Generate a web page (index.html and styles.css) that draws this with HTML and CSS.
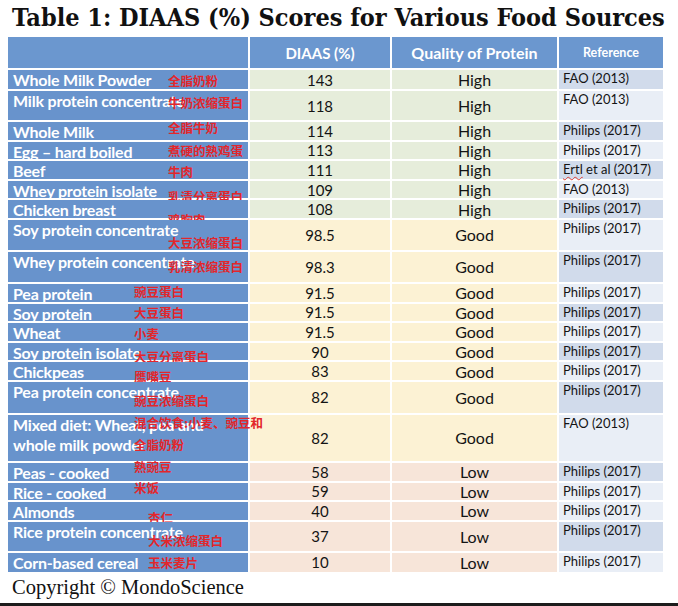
FILE: index.html
```html
<!DOCTYPE html>
<html lang="en">
<head>
<meta charset="utf-8">
<title>DIAAS Scores</title>
<link rel="stylesheet" href="styles.css">
</head>
<body>
<div class="page">
  <h1 class="title">Table 1: DIAAS (%) Scores for Various Food Sources</h1>
  <div class="grid">
    <div class="row head">
      <div class="cell h-name"></div>
      <div class="cell h-num">DIAAS (%)</div>
      <div class="cell h-qual">Quality of Protein</div>
      <div class="cell h-ref">Reference</div>
    </div>

    <div class="row high">
      <div class="cell name">Whole Milk Powder<span class="zh g1 y5">全脂奶粉</span></div>
      <div class="cell num">143</div><div class="cell qual">High</div><div class="cell ref dark">FAO (2013)</div>
    </div>
    <div class="row high">
      <div class="cell name">Milk protein concentrate<span class="zh g1 y6">牛奶浓缩蛋白</span></div>
      <div class="cell num">118</div><div class="cell qual">High</div><div class="cell ref">FAO (2013)</div>
    </div>
    <div class="row high">
      <div class="cell name">Whole Milk<span class="zh g1 y0">全脂牛奶</span></div>
      <div class="cell num">114</div><div class="cell qual">High</div><div class="cell ref dark">Philips (2017)</div>
    </div>
    <div class="row high">
      <div class="cell name">Egg – hard boiled<span class="zh g1 y3">煮硬的熟鸡蛋</span></div>
      <div class="cell num">113</div><div class="cell qual">High</div><div class="cell ref">Philips (2017)</div>
    </div>
    <div class="row high">
      <div class="cell name">Beef<span class="zh g1 y5">牛肉</span></div>
      <div class="cell num">111</div><div class="cell qual">High</div><div class="cell ref dark"><span class="spell">Ertl</span> et al (2017)</div>
    </div>
    <div class="row high">
      <div class="cell name">Whey protein isolate<span class="zh g1 y10">乳清分离蛋白</span></div>
      <div class="cell num">109</div><div class="cell qual">High</div><div class="cell ref">FAO (2013)</div>
    </div>
    <div class="row high">
      <div class="cell name">Chicken breast<span class="zh g1 y14">鸡胸肉</span></div>
      <div class="cell num">108</div><div class="cell qual">High</div><div class="cell ref dark">Philips (2017)</div>
    </div>

    <div class="row good">
      <div class="cell name">Soy protein concentrate<span class="zh g1 y17">大豆浓缩蛋白</span></div>
      <div class="cell num">98.5</div><div class="cell qual">Good</div><div class="cell ref">Philips (2017)</div>
    </div>
    <div class="row good">
      <div class="cell name">Whey protein concentrate<span class="zh g1 y9">乳清浓缩蛋白</span></div>
      <div class="cell num">98.3</div><div class="cell qual">Good</div><div class="cell ref dark">Philips (2017)</div>
    </div>
    <div class="row good">
      <div class="cell name">Pea protein<span class="zh g2 y2">豌豆蛋白</span></div>
      <div class="cell num">91.5</div><div class="cell qual">Good</div><div class="cell ref">Philips (2017)</div>
    </div>
    <div class="row good">
      <div class="cell name">Soy protein<span class="zh g2 y3">大豆蛋白</span></div>
      <div class="cell num">91.5</div><div class="cell qual">Good</div><div class="cell ref dark">Philips (2017)</div>
    </div>
    <div class="row good">
      <div class="cell name">Wheat<span class="zh g2 y5">小麦</span></div>
      <div class="cell num">91.5</div><div class="cell qual">Good</div><div class="cell ref">Philips (2017)</div>
    </div>
    <div class="row good">
      <div class="cell name">Soy protein isolate<span class="zh g2 y8">大豆分离蛋白</span></div>
      <div class="cell num">90</div><div class="cell qual">Good</div><div class="cell ref dark">Philips (2017)</div>
    </div>
    <div class="row good">
      <div class="cell name">Chickpeas<span class="zh g2 y9">鹰嘴豆</span></div>
      <div class="cell num">83</div><div class="cell qual">Good</div><div class="cell ref">Philips (2017)</div>
    </div>
    <div class="row good">
      <div class="cell name">Pea protein concentrate<span class="zh g2 y13">豌豆浓缩蛋白</span></div>
      <div class="cell num">82</div><div class="cell qual">Good</div><div class="cell ref dark">Philips (2017)</div>
    </div>
    <div class="row good mixed">
      <div class="cell name">Mixed diet: Wheat, pea and<br>whole milk powder<span class="zh g2 y1 two">混合饮食:小麦、豌豆和<br>全脂奶粉</span></div>
      <div class="cell num">82</div><div class="cell qual">Good</div><div class="cell ref">FAO (2013)</div>
    </div>

    <div class="row low">
      <div class="cell name">Peas - cooked<span class="zh g2 ym2">熟豌豆</span></div>
      <div class="cell num">58</div><div class="cell qual">Low</div><div class="cell ref dark">Philips (2017)</div>
    </div>
    <div class="row low">
      <div class="cell name">Rice - cooked<span class="zh g2 ym1">米饭</span></div>
      <div class="cell num">59</div><div class="cell qual">Low</div><div class="cell ref">Philips (2017)</div>
    </div>
    <div class="row low">
      <div class="cell name">Almonds<span class="zh g3 y10">杏仁</span></div>
      <div class="cell num">40</div><div class="cell qual">Low</div><div class="cell ref">Philips (2017)</div>
    </div>
    <div class="row low">
      <div class="cell name">Rice protein concentrate<span class="zh g3 y13">大米浓缩蛋白</span></div>
      <div class="cell num">37</div><div class="cell qual">Low</div><div class="cell ref dark">Philips (2017)</div>
    </div>
    <div class="row low">
      <div class="cell name">Corn-based cereal<span class="zh g3 y4">玉米麦片</span></div>
      <div class="cell num">10</div><div class="cell qual">Low</div><div class="cell ref">Philips (2017)</div>
    </div>
  </div>
  <p class="copy">Copyright © MondoScience</p>
  <div class="rule"></div>
</div>
</body>
</html>
```
FILE: styles.css
```css
* { box-sizing: border-box; }
html, body { margin: 0; padding: 0; background: #ffffff; }
body {
  width: 678px;
  height: 606px;
  overflow: hidden;
  font-family: Lato, "Liberation Sans", sans-serif;
}
.page {
  display: flex;
  flex-direction: column;
  height: 606px;
}
.title {
  margin: 0;
  height: 37px;
  padding: 3px 0 0 12px;
  font-family: "DejaVu Serif Condensed", "DejaVu Serif", serif;
  font-stretch: condensed;
  font-weight: 700;
  font-size: 25px;
  line-height: 29px;
  color: #111111;
  white-space: nowrap;
}
.grid {
  margin-left: 8px;
  width: 655px;
  display: grid;
  grid-template-columns: 240px 140px 165px 104px;
  grid-template-rows: 31px 19px 29px repeat(5, 17.6px) 30px 30px repeat(5, 17.6px) 31px 46px repeat(3, 17.6px) 29px 19px;
  gap: 2px;
}
.row { display: contents; }
.cell { min-width: 0; }

.head .cell {
  background: #6b97cf;
  color: #ffffff;
  font-weight: 700;
  display: flex;
  align-items: center;
  justify-content: center;
}
.h-num { font-size: 15px; }
.h-qual { font-size: 16px; }
.h-ref { font-size: 12.5px; }

.name {
  position: relative;
  background: #6893cc;
  color: #ffffff;
  font-weight: 700;
  font-size: 16px;
  letter-spacing: -0.2px;
  line-height: 18px;
  padding: 1px 0 0 5px;
  white-space: nowrap;
}
.mixed .name { line-height: 20px; padding-top: 0; }

.num, .qual {
  display: flex;
  align-items: center;
  justify-content: center;
  color: #141414;
}
.num { font-size: 15px; }
.qual { font-size: 16px; }
.high .num, .high .qual { background: #e6eddb; }
.good .num, .good .qual { background: #fcf2d4; }
.low .num, .low .qual { background: #f7e5d9; }

.ref {
  background: #e9eef6;
  color: #141414;
  font-size: 13px;
  line-height: 15px;
  padding: 1px 0 0 4px;
  white-space: nowrap;
}
.ref.dark { background: #d1dbeb; }
.spell { text-decoration: underline wavy #e03a30; text-decoration-thickness: 1px; text-underline-offset: 2px; }

.zh {
  position: absolute;
  font-family: "Noto Sans CJK SC", sans-serif;
  font-weight: 700;
  font-size: 12.5px;
  line-height: 12.5px;
  letter-spacing: 0;
  color: #e3262b;
  white-space: nowrap;
}
.zh.two { line-height: 22px; }
.g1 { left: 160px; }
.g2 { left: 126px; }
.g3 { left: 140px; }
.ym2 { top: -2px; }
.ym1 { top: -1px; }
.y0 { top: 0; }
.y1 { top: 1px; }
.y2 { top: 2px; }
.y3 { top: 3.5px; }
.y4 { top: 4px; }
.y5 { top: 5px; }
.y6 { top: 6px; }
.y8 { top: 8px; }
.y9 { top: 9px; }
.y10 { top: 10px; }
.y13 { top: 13px; }
.y14 { top: 14px; }
.y17 { top: 17px; }
.zh.two.y1 { top: -3px; }

.copy {
  margin: 3px 0 0 12px;
  font: 400 20.5px/24px "Liberation Serif", serif;
  color: #111111;
}
.rule {
  margin-top: auto;
  height: 3px;
  background: #1c1c1c;
}
```
